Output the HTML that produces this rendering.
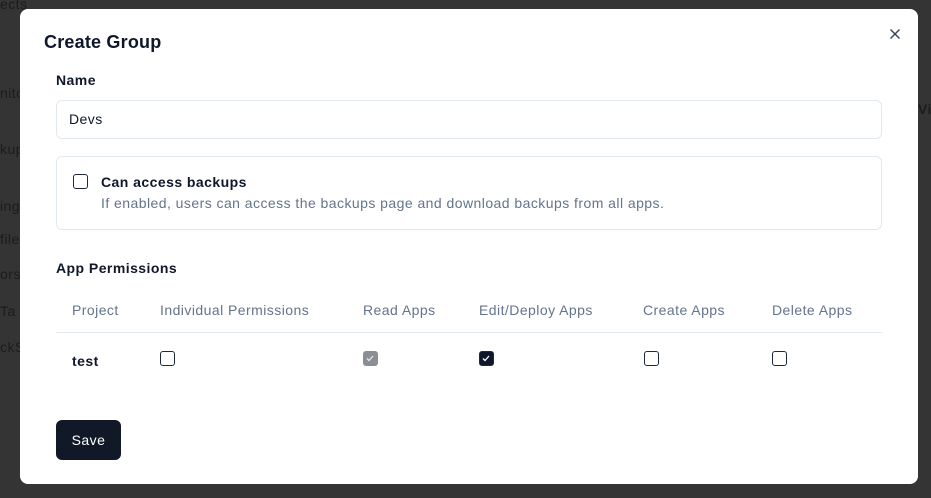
<!DOCTYPE html>
<html><head><style>
*{box-sizing:border-box;margin:0;padding:0}
body{width:931px;height:498px;background:#343434;font-family:"Liberation Sans",sans-serif;position:relative;overflow:hidden;color:#0f172a;letter-spacing:0.45px}
.bg{position:absolute;color:#1c1c1c;font-size:14px}
.modal{position:absolute;left:20px;top:9px;width:898px;height:475px;background:#fff;border-radius:8px}
.abs{position:absolute}
.cb{position:absolute;width:15px;height:15px;border:1.5px solid #1e293b;border-radius:3px;background:#fff}
</style></head><body>
<div class="bg" style="left:0;top:-4px">ects</div>
<div class="bg" style="left:0;top:85px">nito</div>
<div class="bg" style="left:0;top:141px">kup</div>
<div class="bg" style="left:0;top:198px">ing</div>
<div class="bg" style="left:0;top:231px">file</div>
<div class="bg" style="left:0;top:266px">ors</div>
<div class="bg" style="left:0;top:303px">Ta</div>
<div class="bg" style="left:0;top:339px">ckS</div>
<div class="bg" style="left:918px;top:101px;font-weight:bold">Vi</div>
<div class="modal">
<div class="abs" style="left:24px;top:23px;font-size:18px;font-weight:bold;letter-spacing:0.2px">Create Group</div>
<svg class="abs" style="left:869px;top:19px" width="12" height="12" viewBox="0 0 12 12"><path d="M1.5 1.5l9 9M10.5 1.5l-9 9" stroke="#334155" stroke-width="1.4"/></svg>
<div class="abs" style="left:36px;top:63px;font-size:14px;font-weight:bold">Name</div>
<div class="abs" style="left:36px;top:91px;width:826px;height:39px;border:1px solid #e2e8f0;border-radius:6px;padding:10px 12px;font-size:14px">Devs</div>
<div class="abs" style="left:36px;top:147px;width:826px;height:74px;border:1px solid #e2e8f0;border-radius:6px"></div>
<div class="cb" style="left:53px;top:165px"></div>
<div class="abs" style="left:81px;top:165px;font-size:14px;font-weight:bold">Can access backups</div>
<div class="abs" style="left:81px;top:186px;font-size:14px;color:#64748b">If enabled, users can access the backups page and download backups from all apps.</div>
<div class="abs" style="left:36px;top:251px;font-size:14px;font-weight:bold">App Permissions</div>
<div class="abs" style="left:36px;top:323px;width:826px;height:1px;background:#e2e8f0"></div>
<div class="abs" style="top:293px;font-size:14px;color:#64748b;left:52px">Project</div>
<div class="abs" style="top:293px;font-size:14px;color:#64748b;left:140px">Individual Permissions</div>
<div class="abs" style="top:293px;font-size:14px;color:#64748b;left:343px">Read Apps</div>
<div class="abs" style="top:293px;font-size:14px;color:#64748b;left:459px">Edit/Deploy Apps</div>
<div class="abs" style="top:293px;font-size:14px;color:#64748b;left:623px">Create Apps</div>
<div class="abs" style="top:293px;font-size:14px;color:#64748b;left:752px">Delete Apps</div>
<div class="abs" style="left:52px;top:344px;font-size:14px;font-weight:bold">test</div>
<div class="cb" style="left:140px;top:342px"></div>
<div class="cb" style="left:343px;top:342px;background:#8b8e94;border-color:#8b8e94"><svg width="12" height="12" viewBox="0 0 12 12" style="position:absolute;left:0;top:0"><path d="M3 6.5l2 2 4-4.5" stroke="#e5e7eb" stroke-width="1.3" fill="none"/></svg></div>
<div class="cb" style="left:459px;top:342px;background:#0f172a"><svg width="12" height="12" viewBox="0 0 12 12" style="position:absolute;left:0;top:0"><path d="M3 6.5l2 2 4-4.5" stroke="#fff" stroke-width="1.3" fill="none"/></svg></div>
<div class="cb" style="left:624px;top:342px"></div>
<div class="cb" style="left:752px;top:342px"></div>
<div class="abs" style="left:36px;top:411px;width:65px;height:40px;background:#111827;border-radius:6px;color:#fff;font-size:14px;line-height:40px;text-align:center">Save</div>
</div>
</body></html>
